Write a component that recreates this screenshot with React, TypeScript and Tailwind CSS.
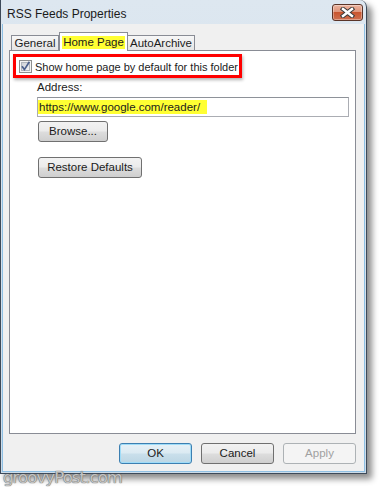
import React from "react";

const ui = "font-['Liberation_Sans',Arial,sans-serif] text-[11.5px] text-[#1b1b1b]";

function VistaButton({
  label,
  width,
  variant = "normal",
}: {
  label: string;
  width: string;
  variant?: "normal" | "default" | "disabled";
}) {
  let cls =
    "border-[#707070] bg-[linear-gradient(#f2f2f2_0%,#ebebeb_48%,#dddddd_52%,#cfcfcf_100%)] text-[#1b1b1b]";
  if (variant === "default") {
    cls =
      "border-[#3c7fb1] bg-[linear-gradient(#e6f1f7_0%,#dbeaf2_48%,#c9dfeb_52%,#bcd6e4_100%)] text-[#1b1b1b] shadow-[inset_0_0_0_1px_#9fdcf8]";
  } else if (variant === "disabled") {
    cls = "border-[#adb2b5] bg-[#f4f4f4] text-[#a0a0a0]";
  }
  return (
    <div
      className={`${width} h-[21px] flex items-center justify-center rounded-[3px] border ${cls}`}
    >
      {label}
    </div>
  );
}

function CheckBox() {
  return (
    <svg width="13" height="13" viewBox="0 0 13 13" className="shrink-0">
      <rect x="0.5" y="0.5" width="12" height="12" fill="#f4f4f4" stroke="#8e8f8f" />
      <defs>
        <linearGradient id="cb" x1="0" y1="0" x2="1" y2="1">
          <stop offset="0" stopColor="#cbcfd5" />
          <stop offset="1" stopColor="#f7f7f7" />
        </linearGradient>
      </defs>
      <rect x="2.5" y="2.5" width="8" height="8" fill="url(#cb)" stroke="#b0b5bc" strokeWidth="1" />
      <path d="M3 6.2 L5.4 9.6 L10.4 1.8" fill="none" stroke="#4a5f8c" strokeWidth="1.7" />
    </svg>
  );
}

function CloseButton() {
  return (
    <div className="w-[31px] h-[17px] rounded-[3px] border border-[#5a3428] overflow-hidden bg-[linear-gradient(#ebb4a0_0%,#df957b_45%,#c9552f_50%,#cf7050_100%)] flex items-center justify-center shadow-[inset_0_0_0_1px_rgba(255,255,255,0.35)]">
      <svg width="15" height="11" viewBox="0 0 15 11">
        <path d="M3 2 L12 9 M12 2 L3 9" stroke="#3b3b3b" strokeWidth="4.4" strokeLinecap="square" />
        <path d="M3 2 L12 9 M12 2 L3 9" stroke="#ffffff" strokeWidth="2.4" strokeLinecap="square" />
      </svg>
    </div>
  );
}

export default function App() {
  return (
    <div className={`relative w-[381px] h-[488px] bg-white overflow-hidden ${ui}`}>
      {/* Dialog window */}
      <div className="w-[367px] h-[474px] flex flex-col border-x border-b border-[#3d4a59] rounded-tr-[7px] bg-[linear-gradient(#dde7f0,#ccdbe8)] shadow-[5px_5px_6px_rgba(0,0,0,0.45)]">
        {/* Title bar */}
        <div className="h-[24px] flex justify-between pl-[6px] pr-[3px]">
          <span className="pt-[7px] text-[12px] leading-[14px] text-[#1a1a1a]">RSS Feeds Properties</span>
          <div className="pt-[4px]">
            <CloseButton />
          </div>
        </div>

        {/* Client area */}
        <div className="flex-1 mx-[1px] mb-[1px] border-x border-b border-[#8fc0e4] bg-[#f0f0f0] flex flex-col pl-[6px] pr-[8px] pt-[8px] pb-[7px]">
          {/* Tabs */}
          <div className="h-[18px] flex items-end pl-[2px]">
            <div className="w-[48px] h-[15px] border border-b-0 border-[#898c95] bg-[linear-gradient(#f7f7f7,#e5e5e5)] flex items-center justify-center leading-[13px]">
              General
            </div>
            <div className="relative z-10 w-[69px] h-[19px] -mb-px border border-b-0 border-[#898c95] bg-white flex items-start justify-center pt-[3px]">
              <span className="bg-[#ffff33] px-[1px] leading-[13px]">Home Page</span>
            </div>
            <div className="w-[67px] h-[15px] border border-b-0 border-l-0 border-[#898c95] bg-[linear-gradient(#f7f7f7,#e5e5e5)] flex items-center justify-center leading-[13px]">
              AutoArchive
            </div>
          </div>

          {/* Panel */}
          <div className="h-[384px] border border-[#898c95] bg-white flex flex-col pl-[3px] pt-[3px]">
            <div className="w-[229px] h-[24px] border-[3px] border-[#ff0000] flex items-center gap-[3px] pl-[3px] pt-[1px] shadow-[1px_2px_3px_rgba(0,0,0,0.3)]">
              <CheckBox />
              <span className="whitespace-nowrap text-[11px] leading-[14px]">
                Show home page by default for this folder
              </span>
            </div>
            <div className="ml-[24px] mt-[2px] leading-[15px]">Address:</div>
            <div className="ml-[24px] mt-[2px] w-[312px] h-[20px] border border-[#abadb3] border-t-[#8e9299] flex items-center">
              <span className="bg-[#ffff33] h-[14px] w-[169px] pl-[1px] leading-[14px] whitespace-nowrap">
                https://www.google.com/reader/
              </span>
            </div>
            <div className="ml-[25px] mt-[4px]">
              <VistaButton label="Browse..." width="w-[70px]" />
            </div>
            <div className="ml-[25px] mt-[15px]">
              <VistaButton label="Restore Defaults" width="w-[104px]" />
            </div>
          </div>

          {/* Dialog buttons */}
          <div className="mt-[9px] flex justify-end gap-[9px]">
            <VistaButton label="OK" width="w-[73px]" variant="default" />
            <VistaButton label="Cancel" width="w-[73px]" />
            <VistaButton label="Apply" width="w-[73px]" variant="disabled" />
          </div>
        </div>
      </div>

      {/* Watermark */}
      <div className="absolute left-[3px] top-[468px] font-['DejaVu_Sans',Verdana,sans-serif] text-[16.5px] leading-[20px] tracking-[-0.9px] text-[#c4c4c4] [text-shadow:0_0_1px_#666,0_0_1px_#666]">
        groovyPost.com
      </div>
    </div>
  );
}
